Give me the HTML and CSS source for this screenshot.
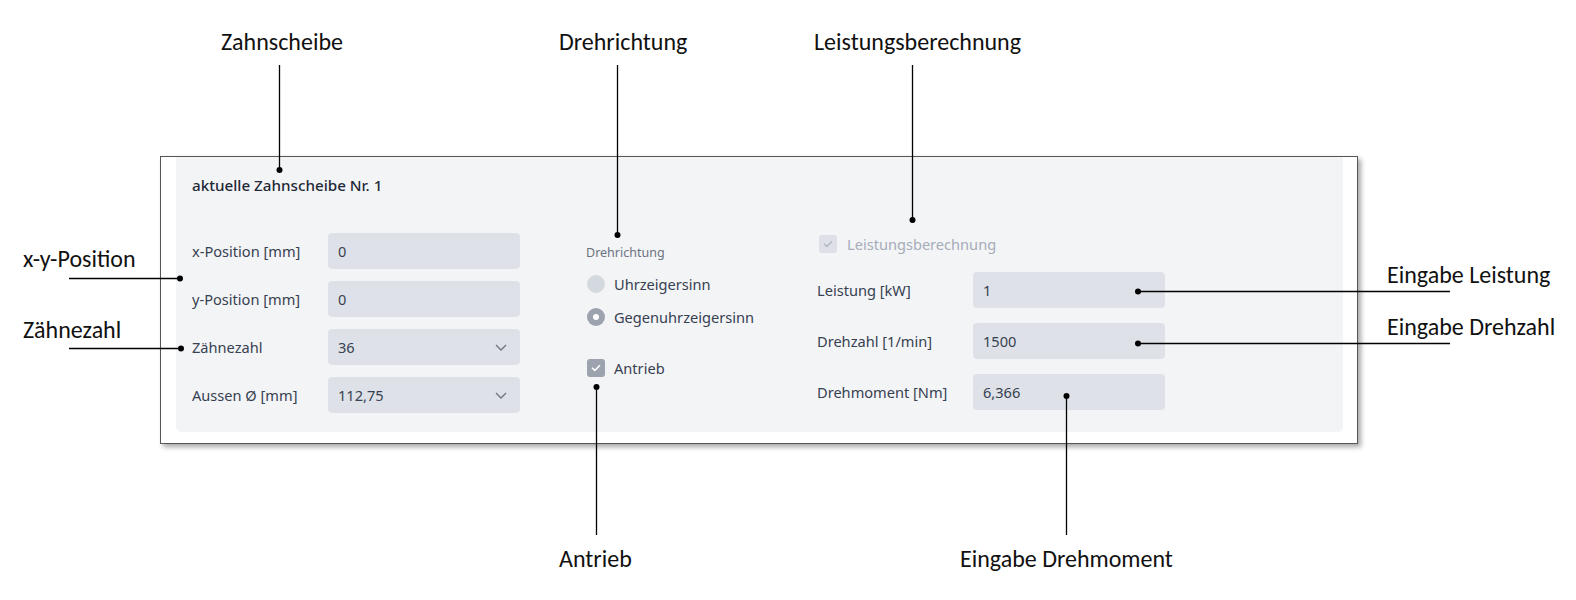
FILE: index.html
```html
<!DOCTYPE html>
<html lang="de">
<head>
    <meta charset="UTF-8">
    <title>Zahnscheibe</title>
    <link rel="stylesheet" href="styles.css">
</head>
<body>
    <div class="stage">
        <div class="frame">
            <div class="panel">
                <h2 class="panel-title">aktuelle Zahnscheibe Nr. 1</h2>

                <div class="columns">
                    <!-- Position und Geometrie -->
                    <div class="col col-geo">
                        <div class="field">
                            <label>x-Position [mm]</label>
                            <div class="input">0</div>
                        </div>
                        <div class="field">
                            <label>y-Position [mm]</label>
                            <div class="input">0</div>
                        </div>
                        <div class="field">
                            <label>Zähnezahl</label>
                            <div class="input select">36
                                <svg class="chevron" width="12" height="7" viewBox="0 0 12 7"><path d="M1 1l5 5 5-5" /></svg>
                            </div>
                        </div>
                        <div class="field">
                            <label>Aussen Ø [mm]</label>
                            <div class="input select">112,75
                                <svg class="chevron" width="12" height="7" viewBox="0 0 12 7"><path d="M1 1l5 5 5-5" /></svg>
                            </div>
                        </div>
                    </div>

                    <!-- Drehrichtung / Antrieb -->
                    <div class="col col-dir">
                        <div class="legend">Drehrichtung</div>
                        <div class="option first">
                            <span class="radio"></span>
                            <span>Uhrzeigersinn</span>
                        </div>
                        <div class="option">
                            <span class="radio checked"></span>
                            <span>Gegenuhrzeigersinn</span>
                        </div>
                        <div class="option drive">
                            <span class="checkbox">
                                <svg width="12" height="12" viewBox="0 0 12 12"><path d="M2.5 6.2l2.3 2.3 4.7-4.8" /></svg>
                            </span>
                            <span>Antrieb</span>
                        </div>
                    </div>

                    <!-- Leistung -->
                    <div class="col col-power">
                        <div class="option disabled">
                            <span class="checkbox">
                                <svg width="12" height="12" viewBox="0 0 12 12"><path d="M2.5 6.2l2.3 2.3 4.7-4.8" /></svg>
                            </span>
                            <span>Leistungsberechnung</span>
                        </div>
                        <div class="field wide">
                            <label>Leistung [kW]</label>
                            <div class="input">1</div>
                        </div>
                        <div class="field wide">
                            <label>Drehzahl [1/min]</label>
                            <div class="input">1500</div>
                        </div>
                        <div class="field wide">
                            <label>Drehmoment [Nm]</label>
                            <div class="input">6,366</div>
                        </div>
                    </div>
                </div>
            </div>
        </div>

        <!-- Beschriftungen -->
        <svg class="callouts" width="1576" height="600" viewBox="0 0 1576 600">
            <g class="lines">
                <path d="M279.5 65V170" />
                <path d="M617.5 65V235" />
                <path d="M912.5 65V220" />
                <path d="M69 278.5H180" />
                <path d="M69 348.5H181" />
                <path d="M1138 291.5H1450" />
                <path d="M1138 343.5H1450" />
                <path d="M596.5 387V535" />
                <path d="M1066.5 396V535" />
            </g>
            <g class="dots">
                <circle cx="279.5" cy="170" r="3" />
                <circle cx="617.5" cy="235" r="3" />
                <circle cx="912.5" cy="220" r="3" />
                <circle cx="180" cy="278.5" r="3" />
                <circle cx="181" cy="348.5" r="3" />
                <circle cx="1138" cy="291.5" r="3" />
                <circle cx="1138" cy="343.5" r="3" />
                <circle cx="596.5" cy="387" r="3" />
                <circle cx="1066.5" cy="396" r="3" />
            </g>
            <g class="notes">
                <text x="221" y="50">Zahnscheibe</text>
                <text x="559" y="50">Drehrichtung</text>
                <text x="814" y="50">Leistungsberechnung</text>
                <text x="23" y="267">x-y-Position</text>
                <text x="23" y="338">Zähnezahl</text>
                <text x="1387" y="283">Eingabe Leistung</text>
                <text x="1387" y="335">Eingabe Drehzahl</text>
                <text x="559" y="567">Antrieb</text>
                <text x="960" y="567">Eingabe Drehmoment</text>
            </g>
        </svg>
    </div>
</body>
</html>
```

FILE: styles.css
```css
* {
    box-sizing: border-box;
}

body {
    margin: 0;
    background-color: #fff;
    font-family: "Noto Sans", "Open Sans", sans-serif;
}

.stage {
    position: relative;
    width: 1576px;
    height: 600px;
    padding: 156px 0 0 160px;
}

/* Fensterrahmen um das Formular */
.frame {
    width: 1198px;
    height: 288px;
    border: 1px solid #555;
    background-color: #fff;
    padding: 0 14px 11px 15px;
    box-shadow: 3px 3px 5px rgba(0, 0, 0, 0.35);
}

.panel {
    height: 100%;
    background-color: #f3f4f6;
    border-radius: 0 0 5px 5px;
    padding: 18px 16px;
}

.panel-title {
    margin: 0;
    font-size: 15.2px;
    line-height: 20px;
    font-weight: 500;
    color: #1f2937;
}

.columns {
    display: grid;
    grid-template-columns: 394px 231px 1fr;
    align-items: start;
    margin-top: 38px;
}

.col {
    display: flex;
    flex-direction: column;
}

.col-geo {
    gap: 12px;
}

.field {
    display: flex;
    align-items: center;
    font-size: 14.6px;
    color: #374151;
}

.field label {
    width: 136px;
}

.field.wide label {
    width: 156px;
}

.input {
    position: relative;
    width: 192px;
    height: 36px;
    line-height: 36px;
    padding-left: 10px;
    border-radius: 4px;
    background-color: #dee2e8;
    color: #374151;
}

.chevron {
    position: absolute;
    right: 13px;
    top: 15px;
}

.chevron path {
    fill: none;
    stroke: #6b7280;
    stroke-width: 1.3;
}

/* Radio / Checkbox */
.col-dir {
    padding-top: 12px;
}

.legend {
    font-size: 12.5px;
    line-height: 16px;
    color: #6b7280;
}

.option {
    display: flex;
    align-items: center;
    gap: 9px;
    height: 24px;
    padding-left: 1px;
    font-size: 14.6px;
    color: #374151;
    margin-top: 9px;
}

.option.first {
    margin-top: 11px;
}

.option.drive {
    margin-top: 27px;
}

.radio {
    width: 18px;
    height: 18px;
    border-radius: 50%;
    background-color: #d4d9e0;
}

.radio.checked {
    background-color: #9ca3af;
    display: flex;
    align-items: center;
    justify-content: center;
}

.radio.checked::after {
    content: "";
    width: 6px;
    height: 6px;
    border-radius: 50%;
    background-color: #fff;
}

.checkbox {
    width: 18px;
    height: 18px;
    border-radius: 3px;
    background-color: #9ca3af;
    display: flex;
    align-items: center;
    justify-content: center;
}

.checkbox path {
    fill: none;
    stroke: #fff;
    stroke-width: 1.6;
    stroke-linecap: round;
    stroke-linejoin: round;
}

.option.disabled {
    margin-top: 1px;
    height: 20px;
    padding-left: 2px;
    gap: 10px;
    color: #a5adb9;
}

.option.disabled .checkbox {
    background-color: #dde1e7;
}

.option.disabled .checkbox path {
    stroke: #b3bac5;
}

.col-power .field {
    margin-top: 15px;
}

.col-power .field:nth-child(2) {
    margin-top: 18px;
}

/* Anmerkungen über dem Formular */
.callouts {
    position: absolute;
    left: 0;
    top: 0;
}

.lines path {
    fill: none;
    stroke: #000;
    stroke-width: 1.3;
}

.dots circle {
    fill: #000;
}

.notes text {
    font-family: Carlito, Lato, sans-serif;
    font-size: 24px;
    fill: #111;
}
```
